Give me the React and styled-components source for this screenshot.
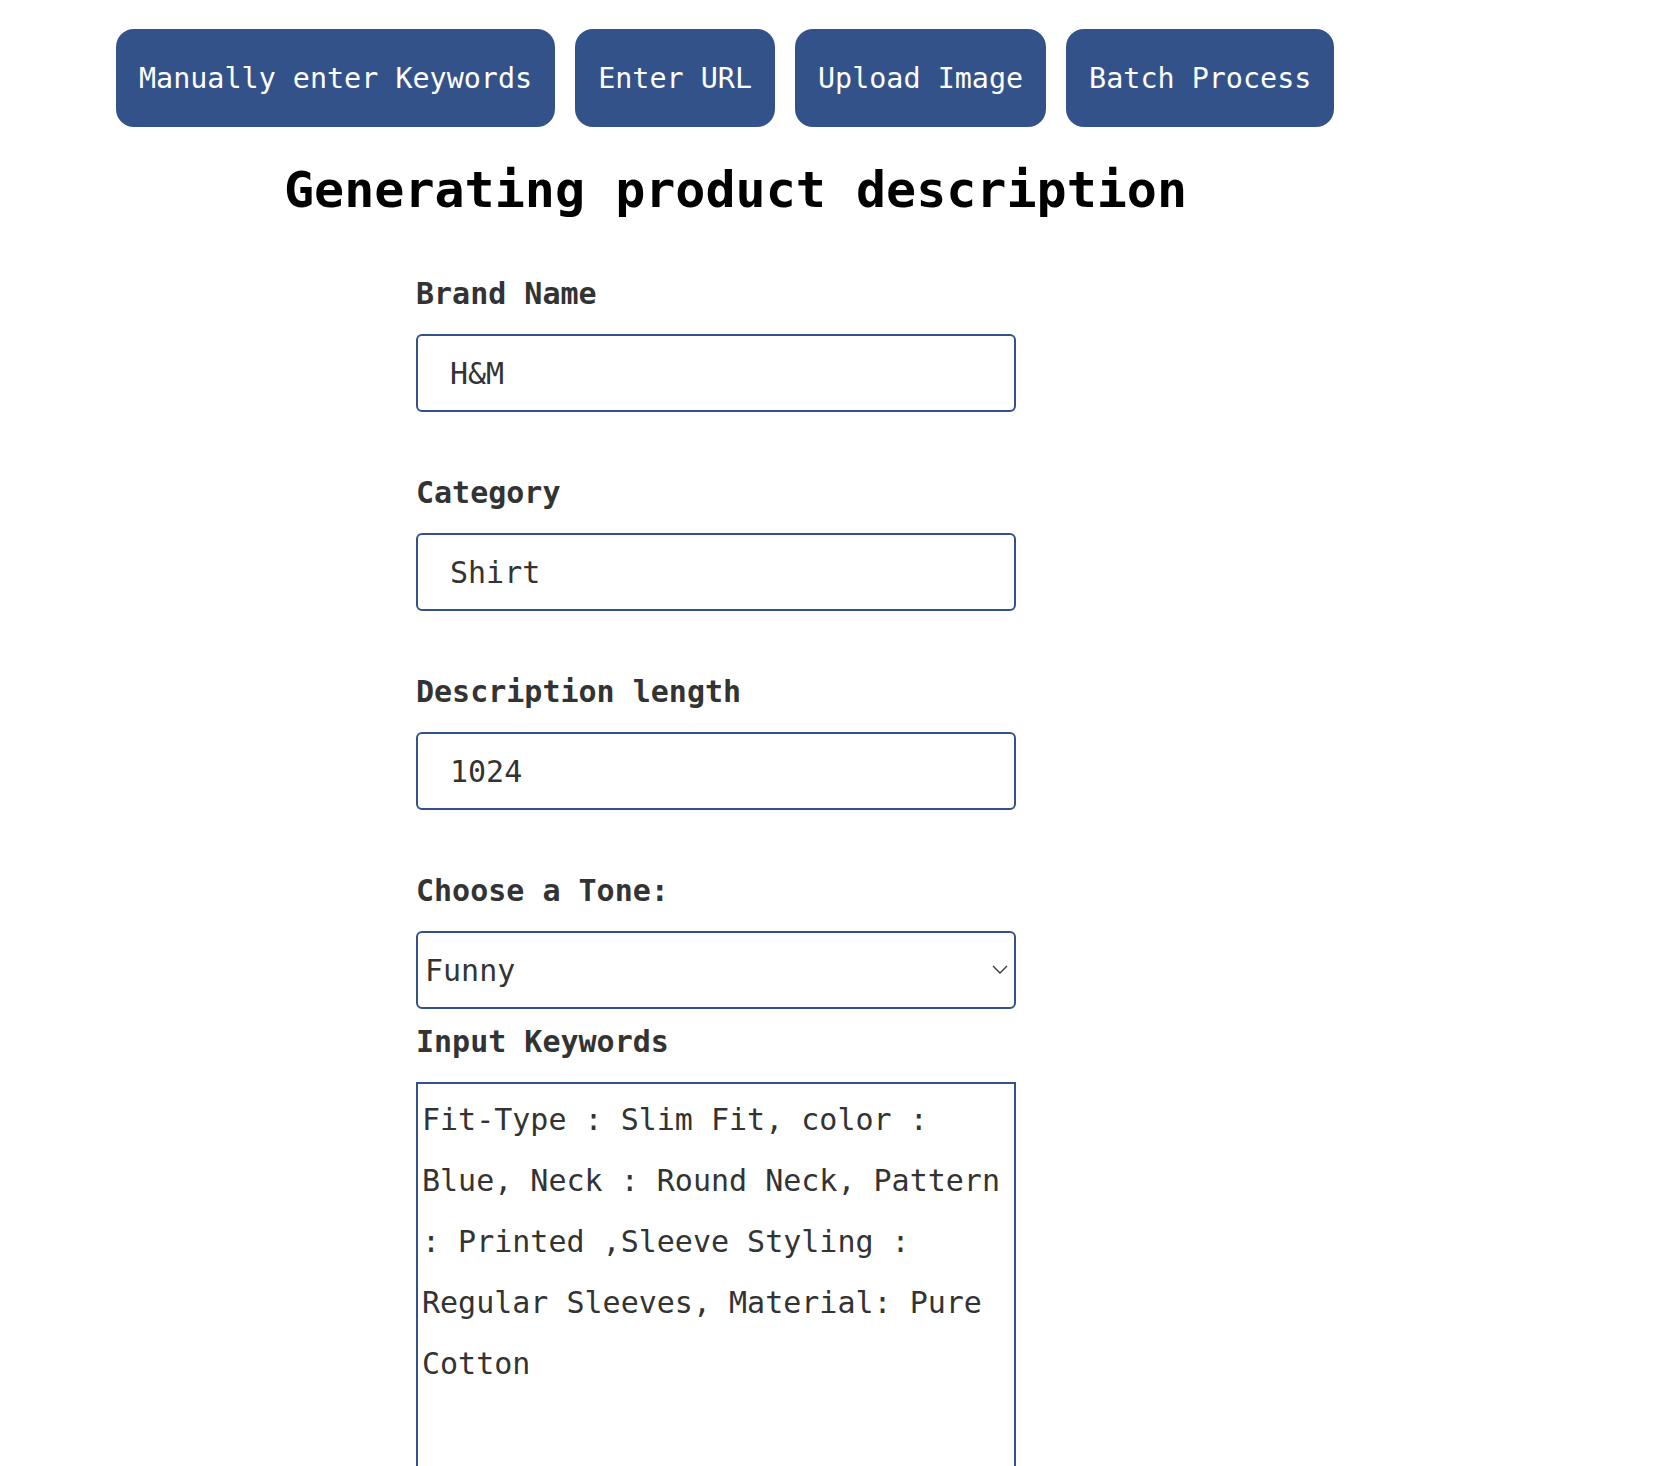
import React, { useState } from "react";
import styled, { createGlobalStyle } from "styled-components";

const GlobalStyle = createGlobalStyle`
  body {
    margin: 0;
    background: #ffffff;
    font-family: "DejaVu Sans Mono", "Liberation Mono", monospace;
  }
`;

const tabs = ["Manually enter Keywords", "Enter URL", "Upload Image", "Batch Process"];

const keywordsText =
  "Fit-Type : Slim Fit, color : Blue, Neck : Round Neck, Pattern : Printed ,Sleeve Styling : Regular Sleeves, Material: Pure Cotton";

function App() {
  const [brand, setBrand] = useState("H&M");
  const [category, setCategory] = useState("Shirt");
  const [length, setLength] = useState("1024");
  const [tone, setTone] = useState("Funny");
  const [keywords, setKeywords] = useState(keywordsText);

  return (
    <>
      <GlobalStyle />
      <Page>
        <Toolbar>
          {tabs.map((tab) => (
            <TabButton key={tab} type="button">
              {tab}
            </TabButton>
          ))}
        </Toolbar>
        <Title>Generating product description</Title>
        <Form onSubmit={(e) => e.preventDefault()}>
          <Field $gap={63}>
            <Label htmlFor="brand">Brand Name</Label>
            <TextInput
              id="brand"
              value={brand}
              onChange={(e) => setBrand(e.target.value)}
            />
          </Field>
          <Field $gap={63}>
            <Label htmlFor="category">Category</Label>
            <TextInput
              id="category"
              value={category}
              onChange={(e) => setCategory(e.target.value)}
            />
          </Field>
          <Field $gap={63}>
            <Label htmlFor="length">Description length</Label>
            <TextInput
              id="length"
              value={length}
              onChange={(e) => setLength(e.target.value)}
            />
          </Field>
          <Field $gap={14.5}>
            <Label htmlFor="tone">Choose a Tone:</Label>
            <SelectWrap>
              <Select
                id="tone"
                value={tone}
                onChange={(e) => setTone(e.target.value)}
              >
                <option>Funny</option>
                <option>Formal</option>
                <option>Casual</option>
              </Select>
              <Chevron width="16" height="9" viewBox="0 0 16 9">
                <path d="M1 1l7 7 7-7" fill="none" stroke="#3a3a3a" strokeWidth="1.4" />
              </Chevron>
            </SelectWrap>
          </Field>
          <Field $gap={0}>
            <Label htmlFor="keywords">Input Keywords</Label>
            <KeywordsArea
              id="keywords"
              value={keywords}
              onChange={(e) => setKeywords(e.target.value)}
            />
          </Field>
        </Form>
      </Page>
    </>
  );
}

export default App;

const Page = styled.div`
  padding-top: 29px;
  font-family: "DejaVu Sans Mono", "Liberation Mono", monospace;
`;

const Toolbar = styled.nav`
  display: flex;
  gap: 20px;
  padding-left: 116px;
`;

const TabButton = styled.button`
  height: 98px;
  padding: 0 23px;
  display: flex;
  align-items: center;
  background-color: #34528a;
  color: #ffffff;
  border: none;
  border-radius: 18px;
  font-family: inherit;
  font-size: 28.4px;
  cursor: pointer;
`;

const Title = styled.h1`
  margin: 34px 0 0 284px;
  font-size: 50px;
  line-height: 58px;
  font-weight: 700;
  color: #000000;
`;

const Form = styled.form`
  margin: 57px 0 0 416px;
  width: 600px;
  display: flex;
  flex-direction: column;
`;

const Field = styled.div`
  display: flex;
  flex-direction: column;
  margin-bottom: ${(p) => p.$gap}px;
`;

const Label = styled.label`
  font-size: 30px;
  line-height: 35px;
  font-weight: 700;
  color: #333333;
  margin-bottom: 23px;
`;

const TextInput = styled.input`
  box-sizing: border-box;
  width: 100%;
  height: 78px;
  padding: 0 32px;
  border: 2px solid #34528a;
  border-radius: 6px;
  font-family: inherit;
  font-size: 30px;
  color: #333333;
  background: #ffffff;
  outline: none;
`;

const SelectWrap = styled.div`
  position: relative;
`;

const Select = styled.select`
  box-sizing: border-box;
  width: 100%;
  height: 78px;
  padding: 0 7px;
  border: 2px solid #34528a;
  border-radius: 6px;
  font-family: inherit;
  font-size: 30px;
  color: #333333;
  background: #ffffff;
  appearance: none;
  outline: none;
`;

const Chevron = styled.svg`
  position: absolute;
  right: 8px;
  top: 34px;
  pointer-events: none;
`;

const KeywordsArea = styled.textarea`
  box-sizing: border-box;
  width: 100%;
  height: 430px;
  padding: 5px 4px 2px;
  border: 2px solid #34528a;
  border-radius: 0;
  font-family: inherit;
  font-size: 30px;
  line-height: 61px;
  color: #333333;
  resize: none;
  outline: none;
`;
